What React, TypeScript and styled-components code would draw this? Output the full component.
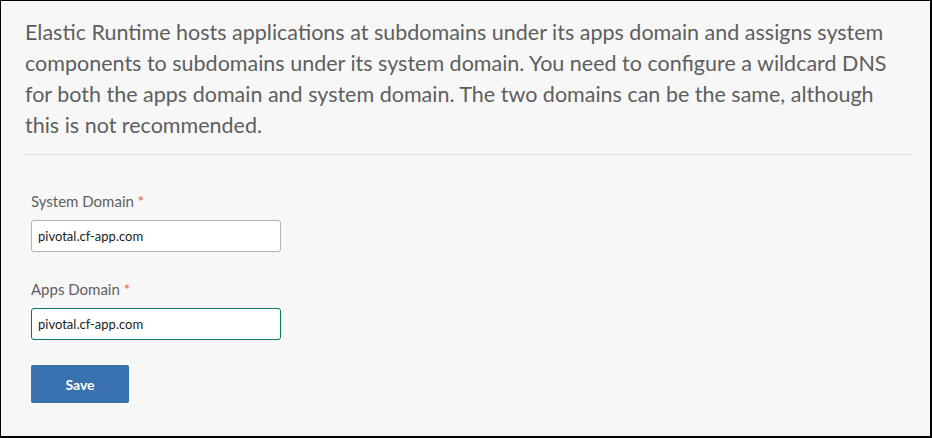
import React from 'react'
import styled, { createGlobalStyle } from 'styled-components'

const GlobalStyle = createGlobalStyle`
  html, body {
    margin: 0;
    padding: 0;
    background: #f7f7f7;
  }
  * {
    box-sizing: border-box;
  }
`

export default function App(): JSX.Element {
  return (
    <>
      <GlobalStyle />
      <Frame>
        <Intro>
          Elastic Runtime hosts applications at subdomains under its apps domain and assigns system
          <br />
          components to subdomains under its system domain. You need to configure a wildcard DNS
          <br />
          for both the apps domain and system domain. The two domains can be the same, although
          <br />
          this is not recommended.
        </Intro>
        <Divider />
        <Form onSubmit={(e) => e.preventDefault()}>
          <Field>
            <Label>
              System Domain <Required>*</Required>
            </Label>
            <TextInput type="text" defaultValue="pivotal.cf-app.com" />
          </Field>
          <Field>
            <Label>
              Apps Domain <Required>*</Required>
            </Label>
            <TextInput type="text" defaultValue="pivotal.cf-app.com" $focused />
          </Field>
          <SaveButton type="submit">Save</SaveButton>
        </Form>
      </Frame>
    </>
  )
}

const Frame = styled.div`
  height: 438px;
  width: 932px;
  background: #f7f7f7;
  border-style: solid;
  border-color: #000;
  border-width: 1px 2px 2px 1px;
  font-family: Lato, 'Open Sans', sans-serif;
  padding: 0 18px 0 23px;
`

const Intro = styled.p`
  margin: 0;
  padding: 16px 0 13px 1px;
  font-size: 21.5px;
  line-height: 31px;
  color: #5e5e5e;
  white-space: nowrap;
`

const Divider = styled.hr`
  margin: 0;
  border: none;
  border-top: 1px solid #dedede;
`

const Form = styled.form`
  display: flex;
  flex-direction: column;
  align-items: flex-start;
  padding: 37px 0 0 7px;
`

const Field = styled.div`
  display: flex;
  flex-direction: column;
  gap: 10px;
  margin-bottom: 28px;

  & + & {
    margin-bottom: 25px;
  }
`

const Label = styled.label`
  font-size: 15px;
  line-height: 18px;
  color: #5f5f5f;
`

const Required = styled.span`
  color: #e85656;
`

const TextInput = styled.input<{ $focused?: boolean }>`
  width: 250px;
  height: 32px;
  padding: 0 6px;
  border: 1px solid ${(p) => (p.$focused ? '#00796b' : '#b3b3b3')};
  border-radius: 3px;
  background: #fff;
  color: #1a1a1a;
  font-family: Lato, 'Open Sans', sans-serif;
  font-size: 13px;
  outline: none;
`

const SaveButton = styled.button`
  width: 98px;
  height: 38px;
  border: none;
  border-radius: 2px;
  background: #3a72b0;
  color: #fff;
  font-family: Lato, 'Open Sans', sans-serif;
  font-size: 14px;
  font-weight: 700;
  cursor: pointer;
`
